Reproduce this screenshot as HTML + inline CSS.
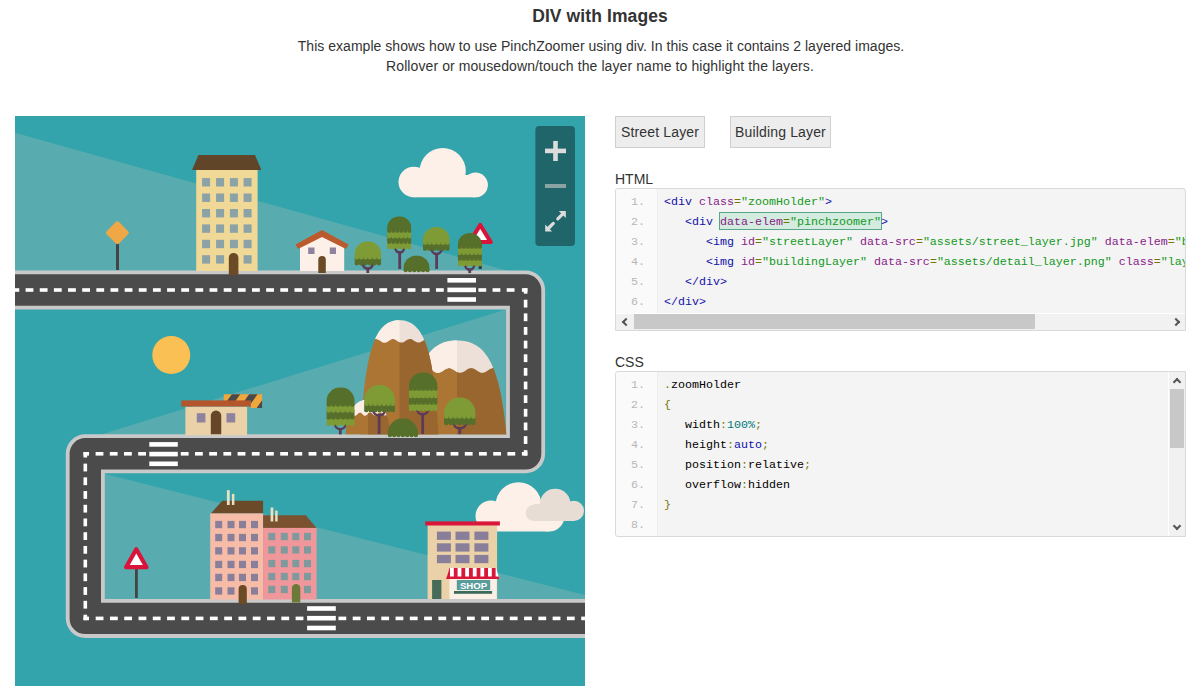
<!DOCTYPE html>
<html><head><meta charset="utf-8">
<style>
html,body{margin:0;padding:0;background:#fff;width:1200px;height:700px;overflow:hidden;position:relative}
body{font-family:"Liberation Sans",sans-serif;color:#333}
.abs{position:absolute}
#title{left:0;width:1200px;text-align:center;top:5px;font-weight:bold;font-size:17.5px;line-height:22px;color:#333;letter-spacing:0.1px}
#desc,#desc2{width:1200px;text-align:center;font-size:14px;line-height:20px;color:#333} #desc{top:36.3px}
.btn{top:116px;height:30px;border:1px solid #cfcfcf;background:#ededed;font-size:14px;line-height:30px;text-align:center;color:#333;box-sizing:content-box;letter-spacing:0.15px}
.lbl{font-size:14px;line-height:16px;color:#333}
.code{position:absolute;left:615px;width:569px;border:1px solid #d9d9d9;border-radius:3px;background:#f4f4f4;overflow:hidden}
.gut{position:absolute;left:0;top:0;width:41px;background:#fafafb;border-right:1px solid #eeeeee}
.ln{position:absolute;font-family:"Liberation Mono",monospace;font-size:11.667px;color:#b7b7b7;white-space:pre}
.cl{position:absolute;font-family:"Liberation Mono",monospace;font-size:11.667px;white-space:pre;color:#000}

.lines{position:absolute;left:0;right:0}
.row{position:relative;height:20px;line-height:20px}
.ln{left:15px;top:0}
.cl{left:48px;top:0}
.hl{position:absolute;background:#d4ebe0;border:1px solid #5aa68a}
.hsb{position:absolute;left:0;right:0;bottom:0;height:16px;background:#f1f1f1;border-top:1px solid #fff}
.hthumb{position:absolute;left:18px;width:401px;top:0px;bottom:1px;background:#c8c8c8}
.vsb{position:absolute;right:0;top:0;bottom:0;width:16px;background:#f1f1f1;border-left:1px solid #fff}
.vthumb{position:absolute;top:17px;height:59px;left:1px;right:1px;background:#c8c8c8}
.arr{position:absolute;width:4px;height:4px;border-left:2px solid #555;border-top:2px solid #555}
.al{left:7px;top:4.5px;transform:rotate(-45deg)}
.ar{right:6px;top:4.5px;transform:rotate(135deg)}
.au{left:5px;top:7px;transform:rotate(45deg)}
.ad{left:5px;bottom:7px;transform:rotate(-135deg)}
.tag{color:#11a} .atn{color:#828} .pun{color:#770} .atv{color:#192} .lit{color:#077} .kwd{color:#11a} .pln{color:#000}
</style></head><body>
<div id="title" class="abs">DIV with Images</div>
<div id="desc" class="abs" style="left:1px;letter-spacing:0.03px">This example shows how to use PinchZoomer using div. In this case it contains 2 layered images.</div>
<div id="desc2" class="abs" style="left:0px;top:56px;letter-spacing:0.09px">Rollover or mousedown/touch the layer name to highlight the layers.</div>

<svg class="abs" style="left:15px;top:116px" width="570" height="570" viewBox="15 116 570 570">
<rect x="15" y="116" width="570" height="570" fill="#33a4ac"/>
<polygon points="15,132.8 540,279.8 540,290 15,290" fill="#58acaf"/>
<polygon points="85,439.4 525,303.6 525,454 85,454" fill="#58acaf"/>
<polygon points="85.3,468.9 590,596.3 590,618 85.3,618" fill="#58acaf"/>
<path d="M10,290 H525.6 V453.8 H85.3 V618.4 H590" fill="none" stroke="#c9c9c9" stroke-width="39" stroke-linejoin="round"/>
<path d="M10,290 H525.6 V453.8 H85.3 V618.4 H590" fill="none" stroke="#4b4b4b" stroke-width="31.4" stroke-linejoin="round"/>
<rect x="11.45" y="288.2" width="7.8" height="3.6" fill="#fff"/>
<rect x="25.6" y="288.2" width="7.8" height="3.6" fill="#fff"/>
<rect x="39.75" y="288.2" width="7.8" height="3.6" fill="#fff"/>
<rect x="53.9" y="288.2" width="7.8" height="3.6" fill="#fff"/>
<rect x="68.05" y="288.2" width="7.8" height="3.6" fill="#fff"/>
<rect x="82.2" y="288.2" width="7.8" height="3.6" fill="#fff"/>
<rect x="96.35" y="288.2" width="7.8" height="3.6" fill="#fff"/>
<rect x="110.5" y="288.2" width="7.8" height="3.6" fill="#fff"/>
<rect x="124.65" y="288.2" width="7.8" height="3.6" fill="#fff"/>
<rect x="138.8" y="288.2" width="7.8" height="3.6" fill="#fff"/>
<rect x="152.95" y="288.2" width="7.8" height="3.6" fill="#fff"/>
<rect x="167.1" y="288.2" width="7.8" height="3.6" fill="#fff"/>
<rect x="181.25" y="288.2" width="7.8" height="3.6" fill="#fff"/>
<rect x="195.4" y="288.2" width="7.8" height="3.6" fill="#fff"/>
<rect x="209.55" y="288.2" width="7.8" height="3.6" fill="#fff"/>
<rect x="223.7" y="288.2" width="7.8" height="3.6" fill="#fff"/>
<rect x="237.85" y="288.2" width="7.8" height="3.6" fill="#fff"/>
<rect x="252" y="288.2" width="7.8" height="3.6" fill="#fff"/>
<rect x="266.15" y="288.2" width="7.8" height="3.6" fill="#fff"/>
<rect x="280.3" y="288.2" width="7.8" height="3.6" fill="#fff"/>
<rect x="294.45" y="288.2" width="7.8" height="3.6" fill="#fff"/>
<rect x="308.6" y="288.2" width="7.8" height="3.6" fill="#fff"/>
<rect x="322.75" y="288.2" width="7.8" height="3.6" fill="#fff"/>
<rect x="336.9" y="288.2" width="7.8" height="3.6" fill="#fff"/>
<rect x="351.05" y="288.2" width="7.8" height="3.6" fill="#fff"/>
<rect x="365.2" y="288.2" width="7.8" height="3.6" fill="#fff"/>
<rect x="379.35" y="288.2" width="7.8" height="3.6" fill="#fff"/>
<rect x="393.5" y="288.2" width="7.8" height="3.6" fill="#fff"/>
<rect x="407.65" y="288.2" width="7.8" height="3.6" fill="#fff"/>
<rect x="421.8" y="288.2" width="7.8" height="3.6" fill="#fff"/>
<rect x="435.95" y="288.2" width="7.8" height="3.6" fill="#fff"/>
<rect x="478.4" y="288.2" width="7.8" height="3.6" fill="#fff"/>
<rect x="492.55" y="288.2" width="7.8" height="3.6" fill="#fff"/>
<rect x="506.7" y="288.2" width="7.8" height="3.6" fill="#fff"/>
<rect x="521.9" y="288.2" width="5.5" height="3.6" fill="#fff"/>
<rect x="523.8" y="288.2" width="3.6" height="5.5" fill="#fff"/>
<rect x="523.8" y="299.74" width="3.6" height="7.8" fill="#fff"/>
<rect x="523.8" y="313.38" width="3.6" height="7.8" fill="#fff"/>
<rect x="523.8" y="327.02" width="3.6" height="7.8" fill="#fff"/>
<rect x="523.8" y="340.66" width="3.6" height="7.8" fill="#fff"/>
<rect x="523.8" y="354.3" width="3.6" height="7.8" fill="#fff"/>
<rect x="523.8" y="367.94" width="3.6" height="7.8" fill="#fff"/>
<rect x="523.8" y="381.58" width="3.6" height="7.8" fill="#fff"/>
<rect x="523.8" y="395.22" width="3.6" height="7.8" fill="#fff"/>
<rect x="523.8" y="408.86" width="3.6" height="7.8" fill="#fff"/>
<rect x="523.8" y="422.5" width="3.6" height="7.8" fill="#fff"/>
<rect x="523.8" y="436.14" width="3.6" height="7.8" fill="#fff"/>
<rect x="521.9" y="452" width="5.5" height="3.6" fill="#fff"/>
<rect x="523.8" y="450.1" width="3.6" height="5.5" fill="#fff"/>
<rect x="95.6" y="452" width="7.8" height="3.6" fill="#fff"/>
<rect x="109.8" y="452" width="7.8" height="3.6" fill="#fff"/>
<rect x="124" y="452" width="7.8" height="3.6" fill="#fff"/>
<rect x="138.2" y="452" width="7.8" height="3.6" fill="#fff"/>
<rect x="180.8" y="452" width="7.8" height="3.6" fill="#fff"/>
<rect x="195" y="452" width="7.8" height="3.6" fill="#fff"/>
<rect x="209.2" y="452" width="7.8" height="3.6" fill="#fff"/>
<rect x="223.4" y="452" width="7.8" height="3.6" fill="#fff"/>
<rect x="237.6" y="452" width="7.8" height="3.6" fill="#fff"/>
<rect x="251.8" y="452" width="7.8" height="3.6" fill="#fff"/>
<rect x="266" y="452" width="7.8" height="3.6" fill="#fff"/>
<rect x="280.2" y="452" width="7.8" height="3.6" fill="#fff"/>
<rect x="294.4" y="452" width="7.8" height="3.6" fill="#fff"/>
<rect x="308.6" y="452" width="7.8" height="3.6" fill="#fff"/>
<rect x="322.8" y="452" width="7.8" height="3.6" fill="#fff"/>
<rect x="337" y="452" width="7.8" height="3.6" fill="#fff"/>
<rect x="351.2" y="452" width="7.8" height="3.6" fill="#fff"/>
<rect x="365.4" y="452" width="7.8" height="3.6" fill="#fff"/>
<rect x="379.6" y="452" width="7.8" height="3.6" fill="#fff"/>
<rect x="393.8" y="452" width="7.8" height="3.6" fill="#fff"/>
<rect x="408" y="452" width="7.8" height="3.6" fill="#fff"/>
<rect x="422.2" y="452" width="7.8" height="3.6" fill="#fff"/>
<rect x="436.4" y="452" width="7.8" height="3.6" fill="#fff"/>
<rect x="450.6" y="452" width="7.8" height="3.6" fill="#fff"/>
<rect x="464.8" y="452" width="7.8" height="3.6" fill="#fff"/>
<rect x="479" y="452" width="7.8" height="3.6" fill="#fff"/>
<rect x="493.2" y="452" width="7.8" height="3.6" fill="#fff"/>
<rect x="507.4" y="452" width="7.8" height="3.6" fill="#fff"/>
<rect x="83.5" y="452" width="5.5" height="3.6" fill="#fff"/>
<rect x="83.5" y="452" width="3.6" height="5.5" fill="#fff"/>
<rect x="83.5" y="463.62" width="3.6" height="7.8" fill="#fff"/>
<rect x="83.5" y="477.34" width="3.6" height="7.8" fill="#fff"/>
<rect x="83.5" y="491.06" width="3.6" height="7.8" fill="#fff"/>
<rect x="83.5" y="504.78" width="3.6" height="7.8" fill="#fff"/>
<rect x="83.5" y="518.5" width="3.6" height="7.8" fill="#fff"/>
<rect x="83.5" y="532.22" width="3.6" height="7.8" fill="#fff"/>
<rect x="83.5" y="545.94" width="3.6" height="7.8" fill="#fff"/>
<rect x="83.5" y="559.66" width="3.6" height="7.8" fill="#fff"/>
<rect x="83.5" y="573.38" width="3.6" height="7.8" fill="#fff"/>
<rect x="83.5" y="587.1" width="3.6" height="7.8" fill="#fff"/>
<rect x="83.5" y="600.82" width="3.6" height="7.8" fill="#fff"/>
<rect x="83.5" y="616.6" width="5.5" height="3.6" fill="#fff"/>
<rect x="83.5" y="614.7" width="3.6" height="5.5" fill="#fff"/>
<rect x="95.68" y="616.6" width="7.8" height="3.6" fill="#fff"/>
<rect x="109.96" y="616.6" width="7.8" height="3.6" fill="#fff"/>
<rect x="124.24" y="616.6" width="7.8" height="3.6" fill="#fff"/>
<rect x="138.52" y="616.6" width="7.8" height="3.6" fill="#fff"/>
<rect x="152.8" y="616.6" width="7.8" height="3.6" fill="#fff"/>
<rect x="167.08" y="616.6" width="7.8" height="3.6" fill="#fff"/>
<rect x="181.36" y="616.6" width="7.8" height="3.6" fill="#fff"/>
<rect x="195.64" y="616.6" width="7.8" height="3.6" fill="#fff"/>
<rect x="209.92" y="616.6" width="7.8" height="3.6" fill="#fff"/>
<rect x="224.2" y="616.6" width="7.8" height="3.6" fill="#fff"/>
<rect x="238.48" y="616.6" width="7.8" height="3.6" fill="#fff"/>
<rect x="252.76" y="616.6" width="7.8" height="3.6" fill="#fff"/>
<rect x="267.04" y="616.6" width="7.8" height="3.6" fill="#fff"/>
<rect x="281.32" y="616.6" width="7.8" height="3.6" fill="#fff"/>
<rect x="295.6" y="616.6" width="7.8" height="3.6" fill="#fff"/>
<rect x="338.44" y="616.6" width="7.8" height="3.6" fill="#fff"/>
<rect x="352.72" y="616.6" width="7.8" height="3.6" fill="#fff"/>
<rect x="367" y="616.6" width="7.8" height="3.6" fill="#fff"/>
<rect x="381.28" y="616.6" width="7.8" height="3.6" fill="#fff"/>
<rect x="395.56" y="616.6" width="7.8" height="3.6" fill="#fff"/>
<rect x="409.84" y="616.6" width="7.8" height="3.6" fill="#fff"/>
<rect x="424.12" y="616.6" width="7.8" height="3.6" fill="#fff"/>
<rect x="438.4" y="616.6" width="7.8" height="3.6" fill="#fff"/>
<rect x="452.68" y="616.6" width="7.8" height="3.6" fill="#fff"/>
<rect x="466.96" y="616.6" width="7.8" height="3.6" fill="#fff"/>
<rect x="481.24" y="616.6" width="7.8" height="3.6" fill="#fff"/>
<rect x="495.52" y="616.6" width="7.8" height="3.6" fill="#fff"/>
<rect x="509.8" y="616.6" width="7.8" height="3.6" fill="#fff"/>
<rect x="524.08" y="616.6" width="7.8" height="3.6" fill="#fff"/>
<rect x="538.36" y="616.6" width="7.8" height="3.6" fill="#fff"/>
<rect x="552.64" y="616.6" width="7.8" height="3.6" fill="#fff"/>
<rect x="566.92" y="616.6" width="7.8" height="3.6" fill="#fff"/>
<rect x="581.2" y="616.6" width="7.8" height="3.6" fill="#fff"/>
<rect x="447.4" y="278" width="28.6" height="4.6" fill="#fff"/>
<rect x="447.4" y="287.6" width="28.6" height="4.6" fill="#fff"/>
<rect x="447.4" y="297.2" width="28.6" height="4.6" fill="#fff"/>
<rect x="149.3" y="442.1" width="28.5" height="4.6" fill="#fff"/>
<rect x="149.3" y="451.8" width="28.5" height="4.6" fill="#fff"/>
<rect x="149.3" y="461.5" width="28.5" height="4.6" fill="#fff"/>
<rect x="307.1" y="606.2" width="28.7" height="4.6" fill="#fff"/>
<rect x="307.1" y="615.9" width="28.7" height="4.6" fill="#fff"/>
<rect x="307.1" y="625.7" width="28.7" height="4.6" fill="#fff"/>
<rect x="116" y="243" width="3" height="27" fill="#444"/>
<rect x="108.7" y="224.1" width="17.4" height="17.4" rx="2.2" fill="#f0a746" transform="rotate(45 117.4 232.8)"/>
<polygon points="198.4,154.9 255,154.9 261.4,170 192.1,170" fill="#614528"/>
<rect x="196.2" y="170" width="61.4" height="101" fill="#f0d896" />
<rect x="202.1" y="178.1" width="8" height="8.4" fill="#8ba2a6" />
<rect x="202.1" y="193.5" width="8" height="8.4" fill="#8ba2a6" />
<rect x="202.1" y="209" width="8" height="8.4" fill="#8ba2a6" />
<rect x="202.1" y="224.4" width="8" height="8.4" fill="#8ba2a6" />
<rect x="202.1" y="239.8" width="8" height="8.4" fill="#8ba2a6" />
<rect x="202.1" y="255.2" width="8" height="8.4" fill="#8ba2a6" />
<rect x="216.1" y="178.1" width="8" height="8.4" fill="#8ba2a6" />
<rect x="216.1" y="193.5" width="8" height="8.4" fill="#8ba2a6" />
<rect x="216.1" y="209" width="8" height="8.4" fill="#8ba2a6" />
<rect x="216.1" y="224.4" width="8" height="8.4" fill="#8ba2a6" />
<rect x="216.1" y="239.8" width="8" height="8.4" fill="#8ba2a6" />
<rect x="216.1" y="255.2" width="8" height="8.4" fill="#8ba2a6" />
<rect x="229.9" y="178.1" width="8" height="8.4" fill="#8ba2a6" />
<rect x="229.9" y="193.5" width="8" height="8.4" fill="#8ba2a6" />
<rect x="229.9" y="209" width="8" height="8.4" fill="#8ba2a6" />
<rect x="229.9" y="224.4" width="8" height="8.4" fill="#8ba2a6" />
<rect x="229.9" y="239.8" width="8" height="8.4" fill="#8ba2a6" />
<rect x="243.6" y="178.1" width="8" height="8.4" fill="#8ba2a6" />
<rect x="243.6" y="193.5" width="8" height="8.4" fill="#8ba2a6" />
<rect x="243.6" y="209" width="8" height="8.4" fill="#8ba2a6" />
<rect x="243.6" y="224.4" width="8" height="8.4" fill="#8ba2a6" />
<rect x="243.6" y="239.8" width="8" height="8.4" fill="#8ba2a6" />
<rect x="243.6" y="255.2" width="8" height="8.4" fill="#8ba2a6" />
<path d="M228.8,275.1 V257.7 A4.8,4.8 0 0 1 238.4,257.7 V275.1 Z" fill="#6b4a26"/>
<polygon points="300,271 300,246 322,234 344.2,246 344.2,271" fill="#fcf0e8"/>
<polygon points="322,230 348.5,244.5 346,249 322,237 298,249 295.5,244.5" fill="#bb5a2d"/>
<rect x="308.2" y="247.5" width="6.3" height="6.5" fill="#8f829e" />
<rect x="329.8" y="247.5" width="6.2" height="6.5" fill="#8f829e" />
<path d="M318.3,273 V259.75 A3.75,3.75 0 0 1 325.8,259.75 V273 Z" fill="#6b4a26"/>
<circle cx="442.7" cy="171.2" r="23.1" fill="#fcf0e8"/>
<circle cx="413.8" cy="182" r="15.3" fill="#fcf0e8"/>
<circle cx="475.5" cy="184.9" r="12.4" fill="#fcf0e8"/>
<rect x="413.8" y="175" width="61.7" height="22.3" fill="#fcf0e8" />
<path d="M367.8,273 V267.3" stroke="#5a3b58" stroke-width="2.8" fill="none"/>
<path d="M362.19,262 Q363.03,268.6 367.8,268.6 Q372.57,268.6 373.41,262" fill="none" stroke="#5a3b58" stroke-width="2.3"/>
<clipPath id="tc1"><path d="M354.5,266.5 V254.55 A13.35,13.35 0 0 1 381.2,254.55 V266.5 Z"/></clipPath>
<g clip-path="url(#tc1)">
<rect x="354.5" y="241.2" width="26.7" height="16.3" fill="#7f9b36" />
<rect x="354.5" y="257" width="26.7" height="6.5" fill="#566f2a" />
<ellipse cx="356.73" cy="257.5" rx="2.22" ry="1.9" fill="#7f9b36"/>
<ellipse cx="361.18" cy="257.5" rx="2.22" ry="1.9" fill="#7f9b36"/>
<ellipse cx="365.62" cy="257.5" rx="2.22" ry="1.9" fill="#7f9b36"/>
<ellipse cx="370.07" cy="257.5" rx="2.22" ry="1.9" fill="#7f9b36"/>
<ellipse cx="374.52" cy="257.5" rx="2.22" ry="1.9" fill="#7f9b36"/>
<ellipse cx="378.97" cy="257.5" rx="2.22" ry="1.9" fill="#7f9b36"/>
<ellipse cx="356.73" cy="263.5" rx="2.22" ry="1.9" fill="#566f2a"/>
<ellipse cx="361.18" cy="263.5" rx="2.22" ry="1.9" fill="#566f2a"/>
<ellipse cx="365.62" cy="263.5" rx="2.22" ry="1.9" fill="#566f2a"/>
<ellipse cx="370.07" cy="263.5" rx="2.22" ry="1.9" fill="#566f2a"/>
<ellipse cx="374.52" cy="263.5" rx="2.22" ry="1.9" fill="#566f2a"/>
<ellipse cx="378.97" cy="263.5" rx="2.22" ry="1.9" fill="#566f2a"/>
</g>
<path d="M399.7,269 V251.2" stroke="#5a3b58" stroke-width="2.8" fill="none"/>
<path d="M394.6,245.9 Q395.36,252.5 399.7,252.5 Q404.04,252.5 404.8,245.9" fill="none" stroke="#5a3b58" stroke-width="2.3"/>
<clipPath id="tc2"><path d="M387.1,250.4 V228.45 A12.15,12.15 0 0 1 411.4,228.45 V250.4 Z"/></clipPath>
<g clip-path="url(#tc2)">
<rect x="387.1" y="216.3" width="24.3" height="14.6" fill="#566f2a" />
<rect x="387.1" y="230.4" width="24.3" height="6.2" fill="#7f9b36" />
<rect x="387.1" y="236.1" width="24.3" height="5.9" fill="#566f2a" />
<rect x="387.1" y="241.5" width="24.3" height="5.9" fill="#7f9b36" />
<ellipse cx="389.12" cy="230.9" rx="2.02" ry="1.9" fill="#566f2a"/>
<ellipse cx="393.18" cy="230.9" rx="2.02" ry="1.9" fill="#566f2a"/>
<ellipse cx="397.23" cy="230.9" rx="2.02" ry="1.9" fill="#566f2a"/>
<ellipse cx="401.27" cy="230.9" rx="2.02" ry="1.9" fill="#566f2a"/>
<ellipse cx="405.32" cy="230.9" rx="2.02" ry="1.9" fill="#566f2a"/>
<ellipse cx="409.38" cy="230.9" rx="2.02" ry="1.9" fill="#566f2a"/>
<ellipse cx="389.12" cy="236.6" rx="2.02" ry="1.9" fill="#7f9b36"/>
<ellipse cx="393.18" cy="236.6" rx="2.02" ry="1.9" fill="#7f9b36"/>
<ellipse cx="397.23" cy="236.6" rx="2.02" ry="1.9" fill="#7f9b36"/>
<ellipse cx="401.27" cy="236.6" rx="2.02" ry="1.9" fill="#7f9b36"/>
<ellipse cx="405.32" cy="236.6" rx="2.02" ry="1.9" fill="#7f9b36"/>
<ellipse cx="409.38" cy="236.6" rx="2.02" ry="1.9" fill="#7f9b36"/>
<ellipse cx="389.12" cy="242" rx="2.02" ry="1.9" fill="#566f2a"/>
<ellipse cx="393.18" cy="242" rx="2.02" ry="1.9" fill="#566f2a"/>
<ellipse cx="397.23" cy="242" rx="2.02" ry="1.9" fill="#566f2a"/>
<ellipse cx="401.27" cy="242" rx="2.02" ry="1.9" fill="#566f2a"/>
<ellipse cx="405.32" cy="242" rx="2.02" ry="1.9" fill="#566f2a"/>
<ellipse cx="409.38" cy="242" rx="2.02" ry="1.9" fill="#566f2a"/>
<ellipse cx="389.12" cy="247.4" rx="2.02" ry="1.9" fill="#7f9b36"/>
<ellipse cx="393.18" cy="247.4" rx="2.02" ry="1.9" fill="#7f9b36"/>
<ellipse cx="397.23" cy="247.4" rx="2.02" ry="1.9" fill="#7f9b36"/>
<ellipse cx="401.27" cy="247.4" rx="2.02" ry="1.9" fill="#7f9b36"/>
<ellipse cx="405.32" cy="247.4" rx="2.02" ry="1.9" fill="#7f9b36"/>
<ellipse cx="409.38" cy="247.4" rx="2.02" ry="1.9" fill="#7f9b36"/>
</g>
<clipPath id="tc3"><path d="M403.4,273.3 V268.55 A13.15,13.15 0 0 1 429.7,268.55 V273.3 Z"/></clipPath>
<g clip-path="url(#tc3)">
<rect x="403.4" y="255.4" width="26.3" height="14.9" fill="#566f2a" />
<ellipse cx="405.59" cy="270.3" rx="2.19" ry="1.9" fill="#566f2a"/>
<ellipse cx="409.97" cy="270.3" rx="2.19" ry="1.9" fill="#566f2a"/>
<ellipse cx="414.36" cy="270.3" rx="2.19" ry="1.9" fill="#566f2a"/>
<ellipse cx="418.74" cy="270.3" rx="2.19" ry="1.9" fill="#566f2a"/>
<ellipse cx="423.12" cy="270.3" rx="2.19" ry="1.9" fill="#566f2a"/>
<ellipse cx="427.51" cy="270.3" rx="2.19" ry="1.9" fill="#566f2a"/>
</g>
<path d="M436.6,269 V252.7" stroke="#5a3b58" stroke-width="2.8" fill="none"/>
<path d="M430.97,247.4 Q431.82,254 436.6,254 Q441.38,254 442.23,247.4" fill="none" stroke="#5a3b58" stroke-width="2.3"/>
<clipPath id="tc4"><path d="M422.9,251.9 V240.3 A13.4,13.4 0 0 1 449.7,240.3 V251.9 Z"/></clipPath>
<g clip-path="url(#tc4)">
<rect x="422.9" y="226.9" width="26.8" height="16" fill="#7f9b36" />
<rect x="422.9" y="242.4" width="26.8" height="6.5" fill="#566f2a" />
<ellipse cx="425.13" cy="242.9" rx="2.23" ry="1.9" fill="#7f9b36"/>
<ellipse cx="429.6" cy="242.9" rx="2.23" ry="1.9" fill="#7f9b36"/>
<ellipse cx="434.07" cy="242.9" rx="2.23" ry="1.9" fill="#7f9b36"/>
<ellipse cx="438.53" cy="242.9" rx="2.23" ry="1.9" fill="#7f9b36"/>
<ellipse cx="443" cy="242.9" rx="2.23" ry="1.9" fill="#7f9b36"/>
<ellipse cx="447.47" cy="242.9" rx="2.23" ry="1.9" fill="#7f9b36"/>
<ellipse cx="425.13" cy="248.9" rx="2.23" ry="1.9" fill="#566f2a"/>
<ellipse cx="429.6" cy="248.9" rx="2.23" ry="1.9" fill="#566f2a"/>
<ellipse cx="434.07" cy="248.9" rx="2.23" ry="1.9" fill="#566f2a"/>
<ellipse cx="438.53" cy="248.9" rx="2.23" ry="1.9" fill="#566f2a"/>
<ellipse cx="443" cy="248.9" rx="2.23" ry="1.9" fill="#566f2a"/>
<ellipse cx="447.47" cy="248.9" rx="2.23" ry="1.9" fill="#566f2a"/>
</g>
<rect x="478.7" y="242" width="3" height="27" fill="#333"/>
<path d="M480.2,225 L490.7,242 L469.7,242 Z" fill="#fff" stroke="#d9143a" stroke-width="4.2" stroke-linejoin="round"/>
<path d="M469.7,273.1 V268.4" stroke="#5a3b58" stroke-width="2.8" fill="none"/>
<path d="M464.6,263.1 Q465.36,269.7 469.7,269.7 Q474.04,269.7 474.8,263.1" fill="none" stroke="#5a3b58" stroke-width="2.3"/>
<clipPath id="tc5"><path d="M457.7,267.6 V245.05 A12.15,12.15 0 0 1 482,245.05 V267.6 Z"/></clipPath>
<g clip-path="url(#tc5)">
<rect x="457.7" y="232.9" width="24.3" height="14" fill="#566f2a" />
<rect x="457.7" y="246.4" width="24.3" height="6.7" fill="#7f9b36" />
<rect x="457.7" y="252.6" width="24.3" height="6.3" fill="#566f2a" />
<rect x="457.7" y="258.4" width="24.3" height="6.2" fill="#7f9b36" />
<ellipse cx="459.72" cy="246.9" rx="2.03" ry="1.9" fill="#566f2a"/>
<ellipse cx="463.77" cy="246.9" rx="2.03" ry="1.9" fill="#566f2a"/>
<ellipse cx="467.82" cy="246.9" rx="2.03" ry="1.9" fill="#566f2a"/>
<ellipse cx="471.88" cy="246.9" rx="2.03" ry="1.9" fill="#566f2a"/>
<ellipse cx="475.93" cy="246.9" rx="2.03" ry="1.9" fill="#566f2a"/>
<ellipse cx="479.98" cy="246.9" rx="2.03" ry="1.9" fill="#566f2a"/>
<ellipse cx="459.72" cy="253.1" rx="2.03" ry="1.9" fill="#7f9b36"/>
<ellipse cx="463.77" cy="253.1" rx="2.03" ry="1.9" fill="#7f9b36"/>
<ellipse cx="467.82" cy="253.1" rx="2.03" ry="1.9" fill="#7f9b36"/>
<ellipse cx="471.88" cy="253.1" rx="2.03" ry="1.9" fill="#7f9b36"/>
<ellipse cx="475.93" cy="253.1" rx="2.03" ry="1.9" fill="#7f9b36"/>
<ellipse cx="479.98" cy="253.1" rx="2.03" ry="1.9" fill="#7f9b36"/>
<ellipse cx="459.72" cy="258.9" rx="2.03" ry="1.9" fill="#566f2a"/>
<ellipse cx="463.77" cy="258.9" rx="2.03" ry="1.9" fill="#566f2a"/>
<ellipse cx="467.82" cy="258.9" rx="2.03" ry="1.9" fill="#566f2a"/>
<ellipse cx="471.88" cy="258.9" rx="2.03" ry="1.9" fill="#566f2a"/>
<ellipse cx="475.93" cy="258.9" rx="2.03" ry="1.9" fill="#566f2a"/>
<ellipse cx="479.98" cy="258.9" rx="2.03" ry="1.9" fill="#566f2a"/>
<ellipse cx="459.72" cy="264.6" rx="2.03" ry="1.9" fill="#7f9b36"/>
<ellipse cx="463.77" cy="264.6" rx="2.03" ry="1.9" fill="#7f9b36"/>
<ellipse cx="467.82" cy="264.6" rx="2.03" ry="1.9" fill="#7f9b36"/>
<ellipse cx="471.88" cy="264.6" rx="2.03" ry="1.9" fill="#7f9b36"/>
<ellipse cx="475.93" cy="264.6" rx="2.03" ry="1.9" fill="#7f9b36"/>
<ellipse cx="479.98" cy="264.6" rx="2.03" ry="1.9" fill="#7f9b36"/>
</g>
<rect x="535.4" y="126" width="39.6" height="120" rx="4" fill="#1f6569"/>
<rect x="545" y="148.6" width="21" height="4.6" fill="#dcdcdc"/>
<rect x="553.2" y="141" width="4.6" height="20" fill="#dcdcdc"/>
<rect x="545" y="184" width="21" height="4" fill="#8aa3a5"/>
<path d="M558.8,210.9 H565.8 V217.9 Z M545.2,224.6 V231.5 H552.1 Z" fill="#dcdcdc"/>
<path d="M562.3,214.4 L557.8,218.9 M548.7,228 L553.3,223.4" stroke="#dcdcdc" stroke-width="3.2" stroke-linecap="round"/>
<circle cx="171.25" cy="355" r="19" fill="#fbc053"/>
<rect x="185.4" y="406.7" width="61.7" height="28.5" fill="#ebd1a8" />
<clipPath id="stripe"><polygon points="223.75,394.2 262.1,394.2 262.1,407.9 250.8,407.9 250.8,401 223.75,401"/></clipPath>
<g clip-path="url(#stripe)"><rect x="223" y="394" width="40" height="14" fill="#f0a83c"/>
<polygon points="197.4,394 205.8,394 195.8,408 187.4,408" fill="#4a4a4a"/>
<polygon points="214.7,394 223.1,394 213.1,408 204.7,408" fill="#4a4a4a"/>
<polygon points="232,394 240.4,394 230.4,408 222,408" fill="#4a4a4a"/>
<polygon points="249.3,394 257.7,394 247.7,408 239.3,408" fill="#4a4a4a"/>
<polygon points="266.6,394 275,394 265,408 256.6,408" fill="#4a4a4a"/>
<polygon points="283.9,394 292.3,394 282.3,408 273.9,408" fill="#4a4a4a"/>
</g>
<rect x="181.25" y="400.4" width="69.55" height="6.1" fill="#b5552b" />
<path d="M210.8,434.2 V415.62 A5.22,5.22 0 0 1 221.25,415.62 V434.2 Z" fill="#654628"/>
<rect x="196.8" y="413.2" width="8.6" height="9.3" fill="#8f829e" />
<rect x="226.5" y="413.2" width="8.7" height="9.3" fill="#8f829e" />
<clipPath id="m2"><path d="M408,434.6 C415,360 430,340.6 457,340.6 C484,340.6 499.3,360 506.3,434.6 Z"/></clipPath>
<g clip-path="url(#m2)">
<rect x="403" y="367.6" width="108.3" height="67" fill="#ad7533" />
<rect x="457" y="367.6" width="54.3" height="67" fill="#9a6630" />
<clipPath id="m2L"><rect x="403" y="338.6" width="54" height="200"/></clipPath>
<path d="M403,339.6 H511.3 L511,369.83 L510.25,370.32 L509.5,370.81 L508.75,371.3 L508,371.74 L507.25,372.12 L506.5,372.43 L505.75,372.65 L505,372.78 L504.25,372.79 L503.5,372.71 L502.75,372.52 L502,372.24 L501.25,371.87 L500.5,371.45 L499.75,370.98 L499,370.48 L498.25,369.99 L497.5,369.51 L496.75,369.08 L496,368.71 L495.25,368.41 L494.5,368.21 L493.75,368.11 L493,368.12 L492.25,368.22 L491.5,368.43 L490.75,368.73 L490,369.11 L489.25,369.54 L488.5,370.02 L487.75,370.52 L487,371.01 L486.25,371.48 L485.5,371.9 L484.75,372.26 L484,372.53 L483.25,372.72 L482.5,372.8 L481.75,372.77 L481,372.64 L480.25,372.42 L479.5,372.1 L478.75,371.71 L478,371.26 L477.25,370.78 L476.5,370.28 L475.75,369.79 L475,369.33 L474.25,368.92 L473.5,368.58 L472.75,368.32 L472,368.16 L471.25,368.1 L470.5,368.15 L469.75,368.3 L469,368.54 L468.25,368.87 L467.5,369.27 L466.75,369.73 L466,370.22 L465.25,370.72 L464.5,371.2 L463.75,371.65 L463,372.05 L462.25,372.38 L461.5,372.62 L460.75,372.76 L460,372.8 L459.25,372.73 L458.5,372.56 L457.75,372.3 L457,371.95 L456.25,371.54 L455.5,371.07 L454.75,370.58 L454,370.09 L453.25,369.6 L452.5,369.16 L451.75,368.78 L451,368.47 L450.25,368.25 L449.5,368.12 L448.75,368.11 L448,368.19 L447.25,368.38 L446.5,368.66 L445.75,369.03 L445,369.45 L444.25,369.92 L443.5,370.42 L442.75,370.91 L442,371.39 L441.25,371.82 L440.5,372.19 L439.75,372.49 L439,372.69 L438.25,372.79 L437.5,372.78 L436.75,372.68 L436,372.47 L435.25,372.17 L434.5,371.79 L433.75,371.36 L433,370.88 L432.25,370.38 L431.5,369.89 L430.75,369.42 L430,369 L429.25,368.64 L428.5,368.37 L427.75,368.18 L427,368.1 L426.25,368.13 L425.5,368.26 L424.75,368.48 L424,368.8 L423.25,369.19 L422.5,369.64 L421.75,370.12 L421,370.62 L420.25,371.11 L419.5,371.57 L418.75,371.98 L418,372.32 L417.25,372.58 L416.5,372.74 L415.75,372.8 L415,372.75 L414.25,372.6 L413.5,372.36 L412.75,372.03 L412,371.62 L411.25,371.17 L410.5,370.68 L409.75,370.18 L409,369.7 L408.25,369.25 L407.5,368.85 L406.75,368.52 L406,368.28 L405.25,368.14 L404.5,368.1 L403.75,368.17 L403,368.34 Z" fill="#ece0d8"/>
<path d="M403,339.6 H511.3 L511,369.83 L510.25,370.32 L509.5,370.81 L508.75,371.3 L508,371.74 L507.25,372.12 L506.5,372.43 L505.75,372.65 L505,372.78 L504.25,372.79 L503.5,372.71 L502.75,372.52 L502,372.24 L501.25,371.87 L500.5,371.45 L499.75,370.98 L499,370.48 L498.25,369.99 L497.5,369.51 L496.75,369.08 L496,368.71 L495.25,368.41 L494.5,368.21 L493.75,368.11 L493,368.12 L492.25,368.22 L491.5,368.43 L490.75,368.73 L490,369.11 L489.25,369.54 L488.5,370.02 L487.75,370.52 L487,371.01 L486.25,371.48 L485.5,371.9 L484.75,372.26 L484,372.53 L483.25,372.72 L482.5,372.8 L481.75,372.77 L481,372.64 L480.25,372.42 L479.5,372.1 L478.75,371.71 L478,371.26 L477.25,370.78 L476.5,370.28 L475.75,369.79 L475,369.33 L474.25,368.92 L473.5,368.58 L472.75,368.32 L472,368.16 L471.25,368.1 L470.5,368.15 L469.75,368.3 L469,368.54 L468.25,368.87 L467.5,369.27 L466.75,369.73 L466,370.22 L465.25,370.72 L464.5,371.2 L463.75,371.65 L463,372.05 L462.25,372.38 L461.5,372.62 L460.75,372.76 L460,372.8 L459.25,372.73 L458.5,372.56 L457.75,372.3 L457,371.95 L456.25,371.54 L455.5,371.07 L454.75,370.58 L454,370.09 L453.25,369.6 L452.5,369.16 L451.75,368.78 L451,368.47 L450.25,368.25 L449.5,368.12 L448.75,368.11 L448,368.19 L447.25,368.38 L446.5,368.66 L445.75,369.03 L445,369.45 L444.25,369.92 L443.5,370.42 L442.75,370.91 L442,371.39 L441.25,371.82 L440.5,372.19 L439.75,372.49 L439,372.69 L438.25,372.79 L437.5,372.78 L436.75,372.68 L436,372.47 L435.25,372.17 L434.5,371.79 L433.75,371.36 L433,370.88 L432.25,370.38 L431.5,369.89 L430.75,369.42 L430,369 L429.25,368.64 L428.5,368.37 L427.75,368.18 L427,368.1 L426.25,368.13 L425.5,368.26 L424.75,368.48 L424,368.8 L423.25,369.19 L422.5,369.64 L421.75,370.12 L421,370.62 L420.25,371.11 L419.5,371.57 L418.75,371.98 L418,372.32 L417.25,372.58 L416.5,372.74 L415.75,372.8 L415,372.75 L414.25,372.6 L413.5,372.36 L412.75,372.03 L412,371.62 L411.25,371.17 L410.5,370.68 L409.75,370.18 L409,369.7 L408.25,369.25 L407.5,368.85 L406.75,368.52 L406,368.28 L405.25,368.14 L404.5,368.1 L403.75,368.17 L403,368.34 Z" fill="#fbeee6" clip-path="url(#m2L)"/>
</g>
<clipPath id="m1"><path d="M360.5,434.6 C365,350 375,320.2 399.5,320.2 C424,320.2 434,350 438.5,434.6 Z"/></clipPath>
<g clip-path="url(#m1)">
<rect x="355.5" y="338.5" width="88" height="96.1" fill="#ad7533" />
<rect x="399.5" y="338.5" width="44" height="96.1" fill="#9a6630" />
<clipPath id="m1L"><rect x="355.5" y="318.2" width="44" height="200"/></clipPath>
<path d="M355.5,319.2 H443.5 L443.25,339.07 L442.5,339.27 L441.75,339.59 L441,340 L440.25,340.47 L439.5,340.97 L438.75,341.45 L438,341.88 L437.25,342.24 L436.5,342.48 L435.75,342.59 L435,342.57 L434.25,342.41 L433.5,342.13 L432.75,341.75 L432,341.29 L431.25,340.8 L430.5,340.31 L429.75,339.85 L429,339.47 L428.25,339.19 L427.5,339.03 L426.75,339.01 L426,339.12 L425.25,339.36 L424.5,339.72 L423.75,340.15 L423,340.63 L422.25,341.13 L421.5,341.6 L420.75,342.01 L420,342.33 L419.25,342.53 L418.5,342.6 L417.75,342.53 L417,342.33 L416.25,342.01 L415.5,341.6 L414.75,341.13 L414,340.63 L413.25,340.15 L412.5,339.72 L411.75,339.36 L411,339.12 L410.25,339.01 L409.5,339.03 L408.75,339.19 L408,339.47 L407.25,339.85 L406.5,340.31 L405.75,340.8 L405,341.29 L404.25,341.75 L403.5,342.13 L402.75,342.41 L402,342.57 L401.25,342.59 L400.5,342.48 L399.75,342.24 L399,341.88 L398.25,341.45 L397.5,340.97 L396.75,340.47 L396,340 L395.25,339.59 L394.5,339.27 L393.75,339.07 L393,339 L392.25,339.07 L391.5,339.27 L390.75,339.59 L390,340 L389.25,340.47 L388.5,340.97 L387.75,341.45 L387,341.88 L386.25,342.24 L385.5,342.48 L384.75,342.59 L384,342.57 L383.25,342.41 L382.5,342.13 L381.75,341.75 L381,341.29 L380.25,340.8 L379.5,340.31 L378.75,339.85 L378,339.47 L377.25,339.19 L376.5,339.03 L375.75,339.01 L375,339.12 L374.25,339.36 L373.5,339.72 L372.75,340.15 L372,340.63 L371.25,341.13 L370.5,341.6 L369.75,342.01 L369,342.33 L368.25,342.53 L367.5,342.6 L366.75,342.53 L366,342.33 L365.25,342.01 L364.5,341.6 L363.75,341.13 L363,340.63 L362.25,340.15 L361.5,339.72 L360.75,339.36 L360,339.12 L359.25,339.01 L358.5,339.03 L357.75,339.19 L357,339.47 L356.25,339.85 L355.5,340.31 Z" fill="#ece0d8"/>
<path d="M355.5,319.2 H443.5 L443.25,339.07 L442.5,339.27 L441.75,339.59 L441,340 L440.25,340.47 L439.5,340.97 L438.75,341.45 L438,341.88 L437.25,342.24 L436.5,342.48 L435.75,342.59 L435,342.57 L434.25,342.41 L433.5,342.13 L432.75,341.75 L432,341.29 L431.25,340.8 L430.5,340.31 L429.75,339.85 L429,339.47 L428.25,339.19 L427.5,339.03 L426.75,339.01 L426,339.12 L425.25,339.36 L424.5,339.72 L423.75,340.15 L423,340.63 L422.25,341.13 L421.5,341.6 L420.75,342.01 L420,342.33 L419.25,342.53 L418.5,342.6 L417.75,342.53 L417,342.33 L416.25,342.01 L415.5,341.6 L414.75,341.13 L414,340.63 L413.25,340.15 L412.5,339.72 L411.75,339.36 L411,339.12 L410.25,339.01 L409.5,339.03 L408.75,339.19 L408,339.47 L407.25,339.85 L406.5,340.31 L405.75,340.8 L405,341.29 L404.25,341.75 L403.5,342.13 L402.75,342.41 L402,342.57 L401.25,342.59 L400.5,342.48 L399.75,342.24 L399,341.88 L398.25,341.45 L397.5,340.97 L396.75,340.47 L396,340 L395.25,339.59 L394.5,339.27 L393.75,339.07 L393,339 L392.25,339.07 L391.5,339.27 L390.75,339.59 L390,340 L389.25,340.47 L388.5,340.97 L387.75,341.45 L387,341.88 L386.25,342.24 L385.5,342.48 L384.75,342.59 L384,342.57 L383.25,342.41 L382.5,342.13 L381.75,341.75 L381,341.29 L380.25,340.8 L379.5,340.31 L378.75,339.85 L378,339.47 L377.25,339.19 L376.5,339.03 L375.75,339.01 L375,339.12 L374.25,339.36 L373.5,339.72 L372.75,340.15 L372,340.63 L371.25,341.13 L370.5,341.6 L369.75,342.01 L369,342.33 L368.25,342.53 L367.5,342.6 L366.75,342.53 L366,342.33 L365.25,342.01 L364.5,341.6 L363.75,341.13 L363,340.63 L362.25,340.15 L361.5,339.72 L360.75,339.36 L360,339.12 L359.25,339.01 L358.5,339.03 L357.75,339.19 L357,339.47 L356.25,339.85 L355.5,340.31 Z" fill="#fbeee6" clip-path="url(#m1L)"/>
</g>
<clipPath id="m3"><path d="M345.5,434.6 C347.5,410 356,399.5 368,399.5 C380,399.5 388.5,410 390.5,434.6 Z"/></clipPath>
<g clip-path="url(#m3)">
<rect x="340.5" y="411.9" width="55" height="22.7" fill="#ad7533" />
<rect x="368" y="411.9" width="27.5" height="22.7" fill="#9a6630" />
<clipPath id="m3L"><rect x="340.5" y="397.5" width="27.5" height="200"/></clipPath>
<path d="M340.5,398.5 H395.5 L395.25,415.58 L394.5,415.52 L393.75,415.13 L393,414.49 L392.25,413.75 L391.5,413.06 L390.75,412.57 L390,412.4 L389.25,412.57 L388.5,413.06 L387.75,413.75 L387,414.49 L386.25,415.13 L385.5,415.52 L384.75,415.58 L384,415.29 L383.25,414.73 L382.5,414 L381.75,413.27 L381,412.71 L380.25,412.42 L379.5,412.48 L378.75,412.87 L378,413.51 L377.25,414.25 L376.5,414.94 L375.75,415.43 L375,415.6 L374.25,415.43 L373.5,414.94 L372.75,414.25 L372,413.51 L371.25,412.87 L370.5,412.48 L369.75,412.42 L369,412.71 L368.25,413.27 L367.5,414 L366.75,414.73 L366,415.29 L365.25,415.58 L364.5,415.52 L363.75,415.13 L363,414.49 L362.25,413.75 L361.5,413.06 L360.75,412.57 L360,412.4 L359.25,412.57 L358.5,413.06 L357.75,413.75 L357,414.49 L356.25,415.13 L355.5,415.52 L354.75,415.58 L354,415.29 L353.25,414.73 L352.5,414 L351.75,413.27 L351,412.71 L350.25,412.42 L349.5,412.48 L348.75,412.87 L348,413.51 L347.25,414.25 L346.5,414.94 L345.75,415.43 L345,415.6 L344.25,415.43 L343.5,414.94 L342.75,414.25 L342,413.51 L341.25,412.87 L340.5,412.48 Z" fill="#ece0d8"/>
<path d="M340.5,398.5 H395.5 L395.25,415.58 L394.5,415.52 L393.75,415.13 L393,414.49 L392.25,413.75 L391.5,413.06 L390.75,412.57 L390,412.4 L389.25,412.57 L388.5,413.06 L387.75,413.75 L387,414.49 L386.25,415.13 L385.5,415.52 L384.75,415.58 L384,415.29 L383.25,414.73 L382.5,414 L381.75,413.27 L381,412.71 L380.25,412.42 L379.5,412.48 L378.75,412.87 L378,413.51 L377.25,414.25 L376.5,414.94 L375.75,415.43 L375,415.6 L374.25,415.43 L373.5,414.94 L372.75,414.25 L372,413.51 L371.25,412.87 L370.5,412.48 L369.75,412.42 L369,412.71 L368.25,413.27 L367.5,414 L366.75,414.73 L366,415.29 L365.25,415.58 L364.5,415.52 L363.75,415.13 L363,414.49 L362.25,413.75 L361.5,413.06 L360.75,412.57 L360,412.4 L359.25,412.57 L358.5,413.06 L357.75,413.75 L357,414.49 L356.25,415.13 L355.5,415.52 L354.75,415.58 L354,415.29 L353.25,414.73 L352.5,414 L351.75,413.27 L351,412.71 L350.25,412.42 L349.5,412.48 L348.75,412.87 L348,413.51 L347.25,414.25 L346.5,414.94 L345.75,415.43 L345,415.6 L344.25,415.43 L343.5,414.94 L342.75,414.25 L342,413.51 L341.25,412.87 L340.5,412.48 Z" fill="#fbeee6" clip-path="url(#m3L)"/>
</g>
<path d="M340.3,434.4 V427.9" stroke="#5a3b58" stroke-width="2.8" fill="none"/>
<path d="M334.36,422.6 Q335.25,429.2 340.3,429.2 Q345.35,429.2 346.24,422.6" fill="none" stroke="#5a3b58" stroke-width="2.3"/>
<clipPath id="tc6"><path d="M326.4,427.1 V401.45 A14.15,14.15 0 0 1 354.7,401.45 V427.1 Z"/></clipPath>
<g clip-path="url(#tc6)">
<rect x="326.4" y="387.3" width="28.3" height="17.5" fill="#566f2a" />
<rect x="326.4" y="404.3" width="28.3" height="6.5" fill="#7f9b36" />
<rect x="326.4" y="410.3" width="28.3" height="7.4" fill="#566f2a" />
<rect x="326.4" y="417.2" width="28.3" height="6.9" fill="#7f9b36" />
<ellipse cx="328.76" cy="404.8" rx="2.36" ry="1.9" fill="#566f2a"/>
<ellipse cx="333.47" cy="404.8" rx="2.36" ry="1.9" fill="#566f2a"/>
<ellipse cx="338.19" cy="404.8" rx="2.36" ry="1.9" fill="#566f2a"/>
<ellipse cx="342.91" cy="404.8" rx="2.36" ry="1.9" fill="#566f2a"/>
<ellipse cx="347.62" cy="404.8" rx="2.36" ry="1.9" fill="#566f2a"/>
<ellipse cx="352.34" cy="404.8" rx="2.36" ry="1.9" fill="#566f2a"/>
<ellipse cx="328.76" cy="410.8" rx="2.36" ry="1.9" fill="#7f9b36"/>
<ellipse cx="333.47" cy="410.8" rx="2.36" ry="1.9" fill="#7f9b36"/>
<ellipse cx="338.19" cy="410.8" rx="2.36" ry="1.9" fill="#7f9b36"/>
<ellipse cx="342.91" cy="410.8" rx="2.36" ry="1.9" fill="#7f9b36"/>
<ellipse cx="347.62" cy="410.8" rx="2.36" ry="1.9" fill="#7f9b36"/>
<ellipse cx="352.34" cy="410.8" rx="2.36" ry="1.9" fill="#7f9b36"/>
<ellipse cx="328.76" cy="417.7" rx="2.36" ry="1.9" fill="#566f2a"/>
<ellipse cx="333.47" cy="417.7" rx="2.36" ry="1.9" fill="#566f2a"/>
<ellipse cx="338.19" cy="417.7" rx="2.36" ry="1.9" fill="#566f2a"/>
<ellipse cx="342.91" cy="417.7" rx="2.36" ry="1.9" fill="#566f2a"/>
<ellipse cx="347.62" cy="417.7" rx="2.36" ry="1.9" fill="#566f2a"/>
<ellipse cx="352.34" cy="417.7" rx="2.36" ry="1.9" fill="#566f2a"/>
<ellipse cx="328.76" cy="424.1" rx="2.36" ry="1.9" fill="#7f9b36"/>
<ellipse cx="333.47" cy="424.1" rx="2.36" ry="1.9" fill="#7f9b36"/>
<ellipse cx="338.19" cy="424.1" rx="2.36" ry="1.9" fill="#7f9b36"/>
<ellipse cx="342.91" cy="424.1" rx="2.36" ry="1.9" fill="#7f9b36"/>
<ellipse cx="347.62" cy="424.1" rx="2.36" ry="1.9" fill="#7f9b36"/>
<ellipse cx="352.34" cy="424.1" rx="2.36" ry="1.9" fill="#7f9b36"/>
</g>
<path d="M379.1,434 V414.2" stroke="#5a3b58" stroke-width="2.8" fill="none"/>
<path d="M372.61,408.9 Q373.58,415.5 379.1,415.5 Q384.62,415.5 385.59,408.9" fill="none" stroke="#5a3b58" stroke-width="2.3"/>
<clipPath id="tc7"><path d="M364.1,413.4 V400.15 A15.45,15.45 0 0 1 395,400.15 V413.4 Z"/></clipPath>
<g clip-path="url(#tc7)">
<rect x="364.1" y="384.7" width="30.9" height="19.3" fill="#7f9b36" />
<rect x="364.1" y="403.5" width="30.9" height="6.9" fill="#566f2a" />
<ellipse cx="366.31" cy="404" rx="2.21" ry="1.9" fill="#7f9b36"/>
<ellipse cx="370.72" cy="404" rx="2.21" ry="1.9" fill="#7f9b36"/>
<ellipse cx="375.14" cy="404" rx="2.21" ry="1.9" fill="#7f9b36"/>
<ellipse cx="379.55" cy="404" rx="2.21" ry="1.9" fill="#7f9b36"/>
<ellipse cx="383.96" cy="404" rx="2.21" ry="1.9" fill="#7f9b36"/>
<ellipse cx="388.38" cy="404" rx="2.21" ry="1.9" fill="#7f9b36"/>
<ellipse cx="392.79" cy="404" rx="2.21" ry="1.9" fill="#7f9b36"/>
<ellipse cx="366.31" cy="410.4" rx="2.21" ry="1.9" fill="#566f2a"/>
<ellipse cx="370.72" cy="410.4" rx="2.21" ry="1.9" fill="#566f2a"/>
<ellipse cx="375.14" cy="410.4" rx="2.21" ry="1.9" fill="#566f2a"/>
<ellipse cx="379.55" cy="410.4" rx="2.21" ry="1.9" fill="#566f2a"/>
<ellipse cx="383.96" cy="410.4" rx="2.21" ry="1.9" fill="#566f2a"/>
<ellipse cx="388.38" cy="410.4" rx="2.21" ry="1.9" fill="#566f2a"/>
<ellipse cx="392.79" cy="410.4" rx="2.21" ry="1.9" fill="#566f2a"/>
</g>
<path d="M422.7,434 V413.1" stroke="#5a3b58" stroke-width="2.8" fill="none"/>
<path d="M416.65,407.8 Q417.56,414.4 422.7,414.4 Q427.84,414.4 428.75,407.8" fill="none" stroke="#5a3b58" stroke-width="2.3"/>
<clipPath id="tc8"><path d="M408.8,412.3 V386.6 A14.4,14.4 0 0 1 437.6,386.6 V412.3 Z"/></clipPath>
<g clip-path="url(#tc8)">
<rect x="408.8" y="372.2" width="28.8" height="16.7" fill="#566f2a" />
<rect x="408.8" y="388.4" width="28.8" height="8" fill="#7f9b36" />
<rect x="408.8" y="395.9" width="28.8" height="7" fill="#566f2a" />
<rect x="408.8" y="402.4" width="28.8" height="6.9" fill="#7f9b36" />
<ellipse cx="410.86" cy="388.9" rx="2.06" ry="1.9" fill="#566f2a"/>
<ellipse cx="414.97" cy="388.9" rx="2.06" ry="1.9" fill="#566f2a"/>
<ellipse cx="419.09" cy="388.9" rx="2.06" ry="1.9" fill="#566f2a"/>
<ellipse cx="423.2" cy="388.9" rx="2.06" ry="1.9" fill="#566f2a"/>
<ellipse cx="427.31" cy="388.9" rx="2.06" ry="1.9" fill="#566f2a"/>
<ellipse cx="431.43" cy="388.9" rx="2.06" ry="1.9" fill="#566f2a"/>
<ellipse cx="435.54" cy="388.9" rx="2.06" ry="1.9" fill="#566f2a"/>
<ellipse cx="410.86" cy="396.4" rx="2.06" ry="1.9" fill="#7f9b36"/>
<ellipse cx="414.97" cy="396.4" rx="2.06" ry="1.9" fill="#7f9b36"/>
<ellipse cx="419.09" cy="396.4" rx="2.06" ry="1.9" fill="#7f9b36"/>
<ellipse cx="423.2" cy="396.4" rx="2.06" ry="1.9" fill="#7f9b36"/>
<ellipse cx="427.31" cy="396.4" rx="2.06" ry="1.9" fill="#7f9b36"/>
<ellipse cx="431.43" cy="396.4" rx="2.06" ry="1.9" fill="#7f9b36"/>
<ellipse cx="435.54" cy="396.4" rx="2.06" ry="1.9" fill="#7f9b36"/>
<ellipse cx="410.86" cy="402.9" rx="2.06" ry="1.9" fill="#566f2a"/>
<ellipse cx="414.97" cy="402.9" rx="2.06" ry="1.9" fill="#566f2a"/>
<ellipse cx="419.09" cy="402.9" rx="2.06" ry="1.9" fill="#566f2a"/>
<ellipse cx="423.2" cy="402.9" rx="2.06" ry="1.9" fill="#566f2a"/>
<ellipse cx="427.31" cy="402.9" rx="2.06" ry="1.9" fill="#566f2a"/>
<ellipse cx="431.43" cy="402.9" rx="2.06" ry="1.9" fill="#566f2a"/>
<ellipse cx="435.54" cy="402.9" rx="2.06" ry="1.9" fill="#566f2a"/>
<ellipse cx="410.86" cy="409.3" rx="2.06" ry="1.9" fill="#7f9b36"/>
<ellipse cx="414.97" cy="409.3" rx="2.06" ry="1.9" fill="#7f9b36"/>
<ellipse cx="419.09" cy="409.3" rx="2.06" ry="1.9" fill="#7f9b36"/>
<ellipse cx="423.2" cy="409.3" rx="2.06" ry="1.9" fill="#7f9b36"/>
<ellipse cx="427.31" cy="409.3" rx="2.06" ry="1.9" fill="#7f9b36"/>
<ellipse cx="431.43" cy="409.3" rx="2.06" ry="1.9" fill="#7f9b36"/>
<ellipse cx="435.54" cy="409.3" rx="2.06" ry="1.9" fill="#7f9b36"/>
</g>
<path d="M459.8,434 V427.1" stroke="#5a3b58" stroke-width="2.8" fill="none"/>
<path d="M453.16,421.8 Q454.16,428.4 459.8,428.4 Q465.44,428.4 466.44,421.8" fill="none" stroke="#5a3b58" stroke-width="2.3"/>
<clipPath id="tc9"><path d="M444,426.3 V413.1 A15.8,15.8 0 0 1 475.6,413.1 V426.3 Z"/></clipPath>
<g clip-path="url(#tc9)">
<rect x="444" y="397.3" width="31.6" height="19.5" fill="#7f9b36" />
<rect x="444" y="416.3" width="31.6" height="7" fill="#566f2a" />
<ellipse cx="446.26" cy="416.8" rx="2.26" ry="1.9" fill="#7f9b36"/>
<ellipse cx="450.77" cy="416.8" rx="2.26" ry="1.9" fill="#7f9b36"/>
<ellipse cx="455.29" cy="416.8" rx="2.26" ry="1.9" fill="#7f9b36"/>
<ellipse cx="459.8" cy="416.8" rx="2.26" ry="1.9" fill="#7f9b36"/>
<ellipse cx="464.31" cy="416.8" rx="2.26" ry="1.9" fill="#7f9b36"/>
<ellipse cx="468.83" cy="416.8" rx="2.26" ry="1.9" fill="#7f9b36"/>
<ellipse cx="473.34" cy="416.8" rx="2.26" ry="1.9" fill="#7f9b36"/>
<ellipse cx="446.26" cy="423.3" rx="2.26" ry="1.9" fill="#566f2a"/>
<ellipse cx="450.77" cy="423.3" rx="2.26" ry="1.9" fill="#566f2a"/>
<ellipse cx="455.29" cy="423.3" rx="2.26" ry="1.9" fill="#566f2a"/>
<ellipse cx="459.8" cy="423.3" rx="2.26" ry="1.9" fill="#566f2a"/>
<ellipse cx="464.31" cy="423.3" rx="2.26" ry="1.9" fill="#566f2a"/>
<ellipse cx="468.83" cy="423.3" rx="2.26" ry="1.9" fill="#566f2a"/>
<ellipse cx="473.34" cy="423.3" rx="2.26" ry="1.9" fill="#566f2a"/>
</g>
<clipPath id="tc10"><path d="M387.7,438.3 V433.45 A15.15,15.15 0 0 1 418,433.45 V438.3 Z"/></clipPath>
<g clip-path="url(#tc10)">
<rect x="387.7" y="418.3" width="30.3" height="17" fill="#566f2a" />
<ellipse cx="389.86" cy="435.3" rx="2.16" ry="1.9" fill="#566f2a"/>
<ellipse cx="394.19" cy="435.3" rx="2.16" ry="1.9" fill="#566f2a"/>
<ellipse cx="398.52" cy="435.3" rx="2.16" ry="1.9" fill="#566f2a"/>
<ellipse cx="402.85" cy="435.3" rx="2.16" ry="1.9" fill="#566f2a"/>
<ellipse cx="407.18" cy="435.3" rx="2.16" ry="1.9" fill="#566f2a"/>
<ellipse cx="411.51" cy="435.3" rx="2.16" ry="1.9" fill="#566f2a"/>
<ellipse cx="415.84" cy="435.3" rx="2.16" ry="1.9" fill="#566f2a"/>
</g>
<rect x="135" y="568" width="2.8" height="30" fill="#444"/>
<path d="M136.3,549.3 L146.5,567.2 L126.1,567.2 Z" fill="#fff" stroke="#d9143a" stroke-width="4.2" stroke-linejoin="round"/>
<polygon points="222.3,500.8 263.1,500.8 263.1,513.4 210.8,513.4" fill="#6b4a2a"/>
<rect x="226.9" y="490.2" width="2.8" height="14.8" fill="#ece0c0" />
<rect x="231.9" y="493.9" width="2.5" height="11.1" fill="#ece0c0" />
<rect x="210.2" y="513.4" width="52.9" height="86.1" fill="#f6bca8" />
<rect x="215.2" y="520.9" width="7" height="7.3" fill="#8a7f9a" />
<rect x="215.2" y="533.9" width="7" height="7.3" fill="#8a7f9a" />
<rect x="215.2" y="547.2" width="7" height="7.3" fill="#8a7f9a" />
<rect x="215.2" y="560.8" width="7" height="7.3" fill="#8a7f9a" />
<rect x="215.2" y="573.8" width="7" height="7.3" fill="#8a7f9a" />
<rect x="215.2" y="587.3" width="7" height="7.3" fill="#8a7f9a" />
<rect x="227.5" y="520.9" width="7" height="7.3" fill="#8a7f9a" />
<rect x="227.5" y="533.9" width="7" height="7.3" fill="#8a7f9a" />
<rect x="227.5" y="547.2" width="7" height="7.3" fill="#8a7f9a" />
<rect x="227.5" y="560.8" width="7" height="7.3" fill="#8a7f9a" />
<rect x="227.5" y="573.8" width="7" height="7.3" fill="#8a7f9a" />
<rect x="227.5" y="587.3" width="7" height="7.3" fill="#8a7f9a" />
<rect x="239" y="520.9" width="7" height="7.3" fill="#8a7f9a" />
<rect x="239" y="533.9" width="7" height="7.3" fill="#8a7f9a" />
<rect x="239" y="547.2" width="7" height="7.3" fill="#8a7f9a" />
<rect x="239" y="560.8" width="7" height="7.3" fill="#8a7f9a" />
<rect x="239" y="573.8" width="7" height="7.3" fill="#8a7f9a" />
<rect x="251" y="520.9" width="7" height="7.3" fill="#8a7f9a" />
<rect x="251" y="533.9" width="7" height="7.3" fill="#8a7f9a" />
<rect x="251" y="547.2" width="7" height="7.3" fill="#8a7f9a" />
<rect x="251" y="560.8" width="7" height="7.3" fill="#8a7f9a" />
<rect x="251" y="573.8" width="7" height="7.3" fill="#8a7f9a" />
<rect x="251" y="587.3" width="7" height="7.3" fill="#8a7f9a" />
<path d="M238.6,604 V589 A4.1,4.1 0 0 1 246.8,589 V604 Z" fill="#6b4a26"/>
<polygon points="263.1,515.3 305.8,515.3 316.6,527.9 263.1,527.9" fill="#7a5230"/>
<rect x="270.6" y="507.5" width="2.7" height="14" fill="#ece0c0" />
<rect x="275.2" y="510.6" width="2.4" height="10.9" fill="#ece0c0" />
<rect x="263.1" y="527.9" width="53.5" height="71.6" fill="#f0979b" />
<rect x="268.3" y="532.9" width="7" height="7.3" fill="#7e9a9c" />
<rect x="268.3" y="546.3" width="7" height="7.3" fill="#7e9a9c" />
<rect x="268.3" y="559.9" width="7" height="7.3" fill="#7e9a9c" />
<rect x="268.3" y="572.9" width="7" height="7.3" fill="#7e9a9c" />
<rect x="268.3" y="585.8" width="7" height="7.3" fill="#7e9a9c" />
<rect x="280.8" y="532.9" width="7" height="7.3" fill="#7e9a9c" />
<rect x="280.8" y="546.3" width="7" height="7.3" fill="#7e9a9c" />
<rect x="280.8" y="559.9" width="7" height="7.3" fill="#7e9a9c" />
<rect x="280.8" y="572.9" width="7" height="7.3" fill="#7e9a9c" />
<rect x="280.8" y="585.8" width="7" height="7.3" fill="#7e9a9c" />
<rect x="292.3" y="532.9" width="7" height="7.3" fill="#7e9a9c" />
<rect x="292.3" y="546.3" width="7" height="7.3" fill="#7e9a9c" />
<rect x="292.3" y="559.9" width="7" height="7.3" fill="#7e9a9c" />
<rect x="292.3" y="572.9" width="7" height="7.3" fill="#7e9a9c" />
<rect x="304" y="532.9" width="7" height="7.3" fill="#7e9a9c" />
<rect x="304" y="546.3" width="7" height="7.3" fill="#7e9a9c" />
<rect x="304" y="559.9" width="7" height="7.3" fill="#7e9a9c" />
<rect x="304" y="572.9" width="7" height="7.3" fill="#7e9a9c" />
<rect x="304" y="585.8" width="7" height="7.3" fill="#7e9a9c" />
<path d="M291.9,602.6 V588.2 A4.2,4.2 0 0 1 300.3,588.2 V602.6 Z" fill="#6b7a38"/>
<circle cx="518.5" cy="505.2" r="23" fill="#fcf0e8"/>
<circle cx="491" cy="516" r="15.5" fill="#fcf0e8"/>
<circle cx="549" cy="516" r="15.5" fill="#fcf0e8"/>
<rect x="491" y="505" width="58" height="26.5" fill="#fcf0e8" />
<circle cx="555.2" cy="504" r="15.3" fill="#e8ddd5"/>
<circle cx="533.8" cy="512.9" r="8.1" fill="#e8ddd5"/>
<circle cx="573.9" cy="510.9" r="10.1" fill="#e8ddd5"/>
<rect x="533.8" y="504" width="40.1" height="17" fill="#e8ddd5" />
<rect x="427.6" y="524.8" width="69.5" height="74.2" fill="#ebd1a8" />
<rect x="425.2" y="521.4" width="74.7" height="4.1" fill="#d9173a" />
<rect x="436.9" y="531.6" width="14" height="8.3" fill="#8a7f9a" />
<rect x="436.9" y="543.3" width="14" height="8.3" fill="#8a7f9a" />
<rect x="436.9" y="554.9" width="14" height="8.3" fill="#8a7f9a" />
<rect x="455.5" y="531.6" width="14" height="8.3" fill="#8a7f9a" />
<rect x="455.5" y="543.3" width="14" height="8.3" fill="#8a7f9a" />
<rect x="455.5" y="554.9" width="14" height="8.3" fill="#8a7f9a" />
<rect x="474.4" y="531.6" width="14" height="8.3" fill="#8a7f9a" />
<rect x="474.4" y="543.3" width="14" height="8.3" fill="#8a7f9a" />
<rect x="474.4" y="554.9" width="14" height="8.3" fill="#8a7f9a" />
<rect x="449.4" y="579" width="47.3" height="20" fill="#fbf0e6" />
<clipPath id="awn"><polygon points="449.5,567.9 496,567.9 499.5,579 446.2,579"/></clipPath>
<g clip-path="url(#awn)"><rect x="446" y="567" width="54" height="13" fill="#fff"/>
<rect x="446.2" y="567" width="3.8" height="13" fill="#d9173a"/>
<rect x="453.8" y="567" width="3.8" height="13" fill="#d9173a"/>
<rect x="461.4" y="567" width="3.8" height="13" fill="#d9173a"/>
<rect x="469" y="567" width="3.8" height="13" fill="#d9173a"/>
<rect x="476.6" y="567" width="3.8" height="13" fill="#d9173a"/>
<rect x="484.2" y="567" width="3.8" height="13" fill="#d9173a"/>
<rect x="491.8" y="567" width="3.8" height="13" fill="#d9173a"/>
<rect x="446" y="576.5" width="54" height="2.5" fill="#d9173a"/></g>
<rect x="456.8" y="580" width="33.4" height="10.1" fill="#5a9c9b" />
<text x="473.5" y="588.6" text-anchor="middle" font-family="Liberation Sans" font-weight="bold" font-size="9.6" fill="#fff">SHOP</text>
<rect x="454" y="591" width="38.1" height="2.8" fill="#3d6b5a" />
<rect x="432.1" y="580" width="9.3" height="19" fill="#466b58" />
</svg>

<div class="btn abs" style="left:615px;width:88px">Street Layer</div>
<div class="btn abs" style="left:730px;width:99px">Building Layer</div>
<div class="lbl abs" style="left:615px;top:171px">HTML</div>
<div class="lbl abs" style="left:615px;top:354px">CSS</div>

<div class="code" style="top:188px;height:141px;border-radius:3px 3px 0 0">
  <div class="gut" style="height:125px"></div>
  <div class="hl" style="left:103px;top:23px;width:161px;height:16px"></div>
  <div class="lines" style="top:3px">
    <div class="row"><span class="ln">1.</span><span class="cl"><span class="tag">&lt;div</span> <span class="atn">class</span><span class="pun">=</span><span class="atv">"zoomHolder"</span><span class="tag">&gt;</span></span></div>
    <div class="row"><span class="ln">2.</span><span class="cl">   <span class="tag">&lt;div</span> <span class="atn">data-elem</span><span class="pun">=</span><span class="atv">"pinchzoomer"</span><span class="tag">&gt;</span></span></div>
    <div class="row"><span class="ln">3.</span><span class="cl">      <span class="tag">&lt;img</span> <span class="atn">id</span><span class="pun">=</span><span class="atv">"streetLayer"</span> <span class="atn">data-src</span><span class="pun">=</span><span class="atv">"assets/street_layer.jpg"</span> <span class="atn">data-elem</span><span class="pun">=</span><span class="atv">"bg"</span> <span class="atn">class</span><span class="pun">=</span><span class="atv">"layer"</span><span class="tag">/&gt;</span></span></div>
    <div class="row"><span class="ln">4.</span><span class="cl">      <span class="tag">&lt;img</span> <span class="atn">id</span><span class="pun">=</span><span class="atv">"buildingLayer"</span> <span class="atn">data-src</span><span class="pun">=</span><span class="atv">"assets/detail_layer.png"</span> <span class="atn">class</span><span class="pun">=</span><span class="atv">"layer"</span><span class="tag">/&gt;</span></span></div>
    <div class="row"><span class="ln">5.</span><span class="cl">   <span class="tag">&lt;/div&gt;</span></span></div>
    <div class="row"><span class="ln">6.</span><span class="cl"><span class="tag">&lt;/div&gt;</span></span></div>
  </div>
  <div class="hsb"><div class="hthumb"></div><span class="arr al"></span><span class="arr ar"></span></div>
</div>
<div class="code" style="top:371px;height:164px;border-radius:3px 0 0 3px">
  <div class="gut" style="height:164px"></div>
  <div class="lines" style="top:3px">
    <div class="row"><span class="ln">1.</span><span class="cl"><span class="pun">.</span>zoomHolder</span></div>
    <div class="row"><span class="ln">2.</span><span class="cl"><span class="pun">{</span></span></div>
    <div class="row"><span class="ln">3.</span><span class="cl">   width<span class="pun">:</span><span class="lit">100%</span><span class="pun">;</span></span></div>
    <div class="row"><span class="ln">4.</span><span class="cl">   height<span class="pun">:</span><span class="kwd">auto</span><span class="pun">;</span></span></div>
    <div class="row"><span class="ln">5.</span><span class="cl">   position<span class="pun">:</span>relative<span class="pun">;</span></span></div>
    <div class="row"><span class="ln">6.</span><span class="cl">   overflow<span class="pun">:</span>hidden</span></div>
    <div class="row"><span class="ln">7.</span><span class="cl"><span class="pun">}</span></span></div>
    <div class="row"><span class="ln">8.</span><span class="cl"></span></div>
  </div>
  <div class="vsb"><div class="vthumb"></div><span class="arr au"></span><span class="arr ad"></span></div>
</div>

</body></html>
